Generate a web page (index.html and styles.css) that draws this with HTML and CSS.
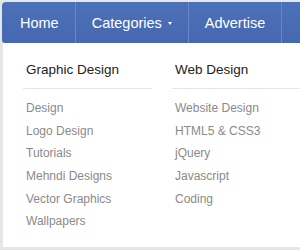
FILE: index.html
```html
<!DOCTYPE html>
<html lang="en">
<head>
    <meta charset="UTF-8">
    <title>Mega Menu</title>
    <link rel="stylesheet" href="styles.css">
</head>
<body>
    <div class="page">
        <nav class="navbar">
            <a class="nav-item first" href="#">Home</a>
            <a class="nav-item" href="#">Categories<span class="caret"></span></a>
            <a class="nav-item" href="#">Advertise</a>
            <span class="nav-rest"></span>
        </nav>
        <div class="dropdown">
            <div class="column">
                <h3>Graphic Design</h3>
                <ul>
                    <li><a href="#">Design</a></li>
                    <li><a href="#">Logo Design</a></li>
                    <li><a href="#">Tutorials</a></li>
                    <li><a href="#">Mehndi Designs</a></li>
                    <li><a href="#">Vector Graphics</a></li>
                    <li><a href="#">Wallpapers</a></li>
                </ul>
            </div>
            <div class="column">
                <h3>Web Design</h3>
                <ul>
                    <li><a href="#">Website Design</a></li>
                    <li><a href="#">HTML5 &amp; CSS3</a></li>
                    <li><a href="#">jQuery</a></li>
                    <li><a href="#">Javascript</a></li>
                    <li><a href="#">Coding</a></li>
                </ul>
            </div>
        </div>
    </div>
</body>
</html>
```

FILE: styles.css
```css
body {
    margin: 0;
    padding: 0;
    background-color: #e6e6e6;
    font-family: "Liberation Sans", Arial, sans-serif;
    overflow: hidden;
}

.page {
    padding: 2px 0 0 2px;
    width: 340px;
}

.navbar {
    display: flex;
    height: 41px;
    background: linear-gradient(#4d71b9, #4568b0);
    border-top-left-radius: 4px;
    border-bottom-left-radius: 3px;
}

.nav-item {
    display: flex;
    align-items: center;
    padding: 0 16px;
    color: #ffffff;
    font-size: 14.5px;
    text-decoration: none;
    border-right: 1px solid #6a87c4;
}

.nav-item.first {
    padding-left: 18px;
}

.nav-rest {
    flex: 1;
}

.caret {
    display: inline-block;
    width: 0;
    height: 0;
    margin: 1px 0 0 6px;
    border-top: 3px solid #ffffff;
    border-left: 2.5px solid transparent;
    border-right: 2.5px solid transparent;
}

.dropdown {
    display: flex;
    gap: 20px;
    margin-left: 1px;
    height: 204px;
    padding: 0 20px;
    background-color: #ffffff;
}

.column {
    width: 129px;
    flex: none;
}

.column h3 {
    margin: 0;
    padding: 19px 3px 11px;
    font-size: 13.5px;
    font-weight: normal;
    color: #222222;
    border-bottom: 1px solid #e6e6e6;
}

.column ul {
    list-style: none;
    margin: 0;
    padding: 7px 0 0;
}

.column li {
    height: 22.7px;
    line-height: 22px;
}

.column li a {
    padding-left: 3px;
    font-size: 12px;
    color: #8a8a8a;
    text-decoration: none;
}
```
